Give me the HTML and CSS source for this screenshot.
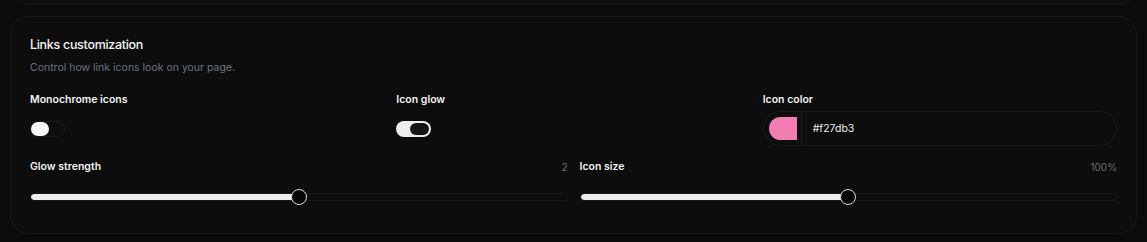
FILE: index.html
```html
<!DOCTYPE html>
<html lang="en">
<head>
<meta charset="utf-8">
<title>Links customization</title>
<link rel="stylesheet" href="styles.css">
</head>
<body>
<div class="page">
  <div class="prev-card"></div>
  <section class="card">
    <h2 class="card-title">Links customization</h2>
    <p class="card-sub">Control how link icons look on your page.</p>
    <div class="row row-3">
      <div class="field">
        <div class="label">Monochrome icons</div>
        <div class="control">
          <span class="toggle toggle-off"><span class="knob"></span></span>
        </div>
      </div>
      <div class="field">
        <div class="label">Icon glow</div>
        <div class="control">
          <span class="toggle toggle-on"><span class="knob"></span></span>
        </div>
      </div>
      <div class="field">
        <div class="label">Icon color</div>
        <div class="control">
          <div class="color-input">
            <div class="swatch-wrap"><span class="swatch"></span></div>
            <span class="color-text">#f27db3</span>
          </div>
        </div>
      </div>
    </div>
    <div class="row row-2">
      <div class="field">
        <div class="label-row"><span class="label">Glow strength</span><span class="value">2</span></div>
        <div class="slider">
          <div class="track"><div class="fill" style="width:50%"></div></div>
          <span class="thumb" style="left:50%"></span>
        </div>
      </div>
      <div class="field">
        <div class="label-row"><span class="label">Icon size</span><span class="value">100%</span></div>
        <div class="slider">
          <div class="track"><div class="fill" style="width:50%"></div></div>
          <span class="thumb" style="left:50%"></span>
        </div>
      </div>
    </div>
  </section>
</div>
</body>
</html>
```
FILE: styles.css
```css
* { box-sizing: border-box; }
html, body {
  margin: 0;
  background: #0b0b0b;
  font-family: Inter, "Liberation Sans", sans-serif;
  color: #f2f2f2;
  overflow: hidden;
}
.page {
  padding: 0 10px;
}
.prev-card {
  height: 40px;
  margin-top: -35px;
  border: 1px solid #181818;
  border-radius: 16px;
  background: #0d0d0d;
}
.card {
  margin-top: 11px;
  height: 218px;
  border: 1px solid #181818;
  border-radius: 18px;
  background: #0d0d0d;
  padding: 19px 19px 0 19px;
}
.card-title {
  margin: 0;
  font-size: 12.5px;
  line-height: 18px;
  font-weight: 500;
  color: #f5f5f5;
  letter-spacing: -0.3px;
}
.card-sub {
  margin: 6px 0 0;
  font-size: 10.5px;
  line-height: 16px;
  color: #6b7280;
}
.row {
  display: grid;
  gap: 12px;
}
.row-3 {
  grid-template-columns: 1fr 1fr 1fr;
  margin-top: 16px;
}
.row-2 {
  grid-template-columns: 1fr 1fr;
  margin-top: 13px;
}
.label {
  font-size: 10.5px;
  line-height: 16px;
  font-weight: 600;
  color: #f2f2f2;
}
.control {
  margin-top: 3px;
  height: 35px;
  display: flex;
  align-items: center;
}
.toggle {
  position: relative;
  display: block;
  width: 35px;
  height: 16px;
  border-radius: 8px;
}
.toggle-off {
  border: 1px solid #1c1c1c;
}
.toggle-off .knob {
  position: absolute;
  left: 0;
  top: 0;
  width: 18px;
  height: 14px;
  border-radius: 7px;
  background: #f7f7f7;
}
.toggle-on {
  background: #ececec;
}
.toggle-on .knob {
  position: absolute;
  right: 2px;
  top: 2px;
  width: 19px;
  height: 12px;
  border-radius: 6px;
  background: #141414;
}
.color-input {
  width: 100%;
  height: 35px;
  border: 1px solid #1a1a1a;
  border-radius: 18px;
  display: flex;
  align-items: stretch;
}
.swatch-wrap {
  padding: 5px 4px 5px 5px;
  border-right: 1px solid #1c1c1c;
  display: flex;
  align-items: center;
}
.swatch {
  display: block;
  width: 28px;
  height: 23px;
  border-radius: 12px 0 0 12px;
  background: #f27db3;
}
.color-text {
  display: flex;
  align-items: center;
  padding-left: 11px;
  font-size: 10.5px;
  color: #ededed;
}
.label-row {
  display: flex;
  justify-content: space-between;
  align-items: center;
}
.value {
  font-size: 10px;
  line-height: 16px;
  color: #6e6e6e;
}
.slider {
  position: relative;
  margin-top: 14px;
  height: 16px;
  display: flex;
  align-items: center;
}
.track {
  width: 100%;
  height: 8px;
  border: 1px solid #1a1a1a;
  border-radius: 4px;
  overflow: hidden;
}
.fill {
  height: 100%;
  background: #eeeeee;
  border-radius: 3px 0 0 3px;
}
.thumb {
  position: absolute;
  top: 0;
  width: 16px;
  height: 16px;
  margin-left: -8px;
  border-radius: 50%;
  background: #050505;
  border: 1px solid #d9d9d9;
}
```
